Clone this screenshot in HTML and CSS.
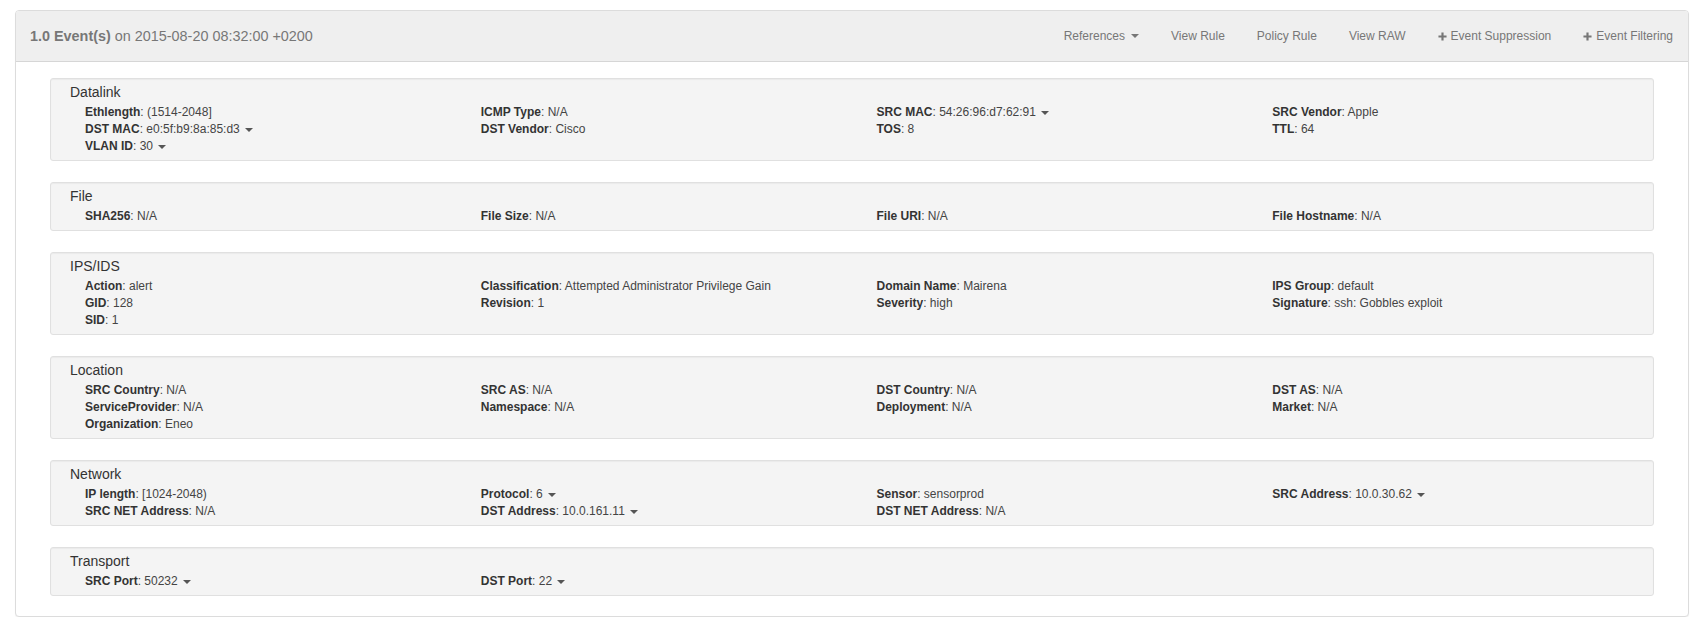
FILE: index.html
```html
<!DOCTYPE html>
<html>
<head>
<meta charset="utf-8">
<link rel="stylesheet" href="styles.css">
</head>
<body>
<div class="panel">
  <div class="panel-heading">
    <div class="title"><b>1.0 Event(s)</b> on 2015-08-20 08:32:00 +0200</div>
    <nav class="links">
      <a class="link">References <span class="caret"></span></a>
      <a class="link">View Rule</a>
      <a class="link">Policy Rule</a>
      <a class="link">View RAW</a>
      <a class="link"><svg class="plus" viewBox="0 0 10 10" width="9" height="9"><path d="M5 0.5v9M0.5 5h9" stroke="#777" stroke-width="2.4"/></svg>Event Suppression</a>
      <a class="link"><svg class="plus" viewBox="0 0 10 10" width="9" height="9"><path d="M5 0.5v9M0.5 5h9" stroke="#777" stroke-width="2.4"/></svg>Event Filtering</a>
    </nav>
  </div>
  <div class="panel-body">
    <section class="well">
      <h4>Datalink</h4>
      <div class="grid">
        <div class="item"><b>Ethlength</b>: (1514-2048]</div>
        <div class="item"><b>ICMP Type</b>: N/A</div>
        <div class="item"><b>SRC MAC</b>: 54:26:96:d7:62:91 <span class="caret"></span></div>
        <div class="item"><b>SRC Vendor</b>: Apple</div>
        <div class="item"><b>DST MAC</b>: e0:5f:b9:8a:85:d3 <span class="caret"></span></div>
        <div class="item"><b>DST Vendor</b>: Cisco</div>
        <div class="item"><b>TOS</b>: 8</div>
        <div class="item"><b>TTL</b>: 64</div>
        <div class="item"><b>VLAN ID</b>: 30 <span class="caret"></span></div>
      </div>
    </section>
    <section class="well">
      <h4>File</h4>
      <div class="grid">
        <div class="item"><b>SHA256</b>: N/A</div>
        <div class="item"><b>File Size</b>: N/A</div>
        <div class="item"><b>File URI</b>: N/A</div>
        <div class="item"><b>File Hostname</b>: N/A</div>
      </div>
    </section>
    <section class="well">
      <h4>IPS/IDS</h4>
      <div class="grid">
        <div class="item"><b>Action</b>: alert</div>
        <div class="item"><b>Classification</b>: Attempted Administrator Privilege Gain</div>
        <div class="item"><b>Domain Name</b>: Mairena</div>
        <div class="item"><b>IPS Group</b>: default</div>
        <div class="item"><b>GID</b>: 128</div>
        <div class="item"><b>Revision</b>: 1</div>
        <div class="item"><b>Severity</b>: high</div>
        <div class="item"><b>Signature</b>: ssh: Gobbles exploit</div>
        <div class="item"><b>SID</b>: 1</div>
      </div>
    </section>
    <section class="well">
      <h4>Location</h4>
      <div class="grid">
        <div class="item"><b>SRC Country</b>: N/A</div>
        <div class="item"><b>SRC AS</b>: N/A</div>
        <div class="item"><b>DST Country</b>: N/A</div>
        <div class="item"><b>DST AS</b>: N/A</div>
        <div class="item"><b>ServiceProvider</b>: N/A</div>
        <div class="item"><b>Namespace</b>: N/A</div>
        <div class="item"><b>Deployment</b>: N/A</div>
        <div class="item"><b>Market</b>: N/A</div>
        <div class="item"><b>Organization</b>: Eneo</div>
      </div>
    </section>
    <section class="well">
      <h4>Network</h4>
      <div class="grid">
        <div class="item"><b>IP length</b>: [1024-2048)</div>
        <div class="item"><b>Protocol</b>: 6 <span class="caret"></span></div>
        <div class="item"><b>Sensor</b>: sensorprod</div>
        <div class="item"><b>SRC Address</b>: 10.0.30.62 <span class="caret"></span></div>
        <div class="item"><b>SRC NET Address</b>: N/A</div>
        <div class="item"><b>DST Address</b>: 10.0.161.11 <span class="caret"></span></div>
        <div class="item"><b>DST NET Address</b>: N/A</div>
      </div>
    </section>
    <section class="well">
      <h4>Transport</h4>
      <div class="grid">
        <div class="item"><b>SRC Port</b>: 50232 <span class="caret"></span></div>
        <div class="item"><b>DST Port</b>: 22 <span class="caret"></span></div>
      </div>
    </section>
  </div>
</div>
</body>
</html>
```
FILE: styles.css
```css
html, body {
  margin: 0;
  padding: 0;
  background: #fff;
}
body {
  font-family: "Liberation Sans", Arial, sans-serif;
  color: #333;
  padding: 10px 16px 0 15px;
}
.panel {
  border: 1px solid #dcdcdc;
  border-radius: 4px;
  box-shadow: 0 1px 1px rgba(0,0,0,.05);
  background: #fff;
}
.panel-heading {
  height: 50px;
  background: #efefef;
  border-bottom: 1px solid #d6d6d6;
  border-radius: 3px 3px 0 0;
  display: flex;
  align-items: center;
  justify-content: space-between;
  padding-left: 14px;
}
.title {
  font-size: 14.4px;
  color: #777;
}
.title b {
  font-weight: bold;
}
.links {
  display: flex;
  align-items: center;
  font-size: 12px;
  color: #777;
}
.link {
  padding: 0 15px 0 17px;
  display: inline-flex;
  align-items: center;
  white-space: nowrap;
}
.link:last-child {
  padding-right: 15px;
}
.plus {
  margin-right: 4px;
}
.caret {
  display: inline-block;
  width: 0;
  height: 0;
  margin-left: 2px;
  vertical-align: middle;
  border-top: 4px solid;
  border-left: 4px solid transparent;
  border-right: 4px solid transparent;
}
.link .caret {
  margin-left: 6px;
}
.panel-body {
  padding: 16px 34px 20px 34px;
}
.well {
  background: #f4f4f4;
  border: 1px solid #e0e0e0;
  border-radius: 3px;
  box-shadow: inset 0 1px 1px rgba(0,0,0,.04);
  padding: 4px 0 5px 19px;
  margin-bottom: 21px;
}
.well:last-child {
  margin-bottom: 0;
}
.well h4 {
  margin: 0 0 3px;
  font-size: 14px;
  font-weight: normal;
  line-height: 18px;
  color: #333;
}
.grid {
  display: grid;
  grid-template-columns: repeat(4, 1fr);
  font-size: 12px;
  line-height: 17px;
}
.item {
  padding-left: 15px;
  color: #444;
  white-space: nowrap;
}
.item b {
  color: #333;
}
.item .caret {
  color: #555;
}
```
